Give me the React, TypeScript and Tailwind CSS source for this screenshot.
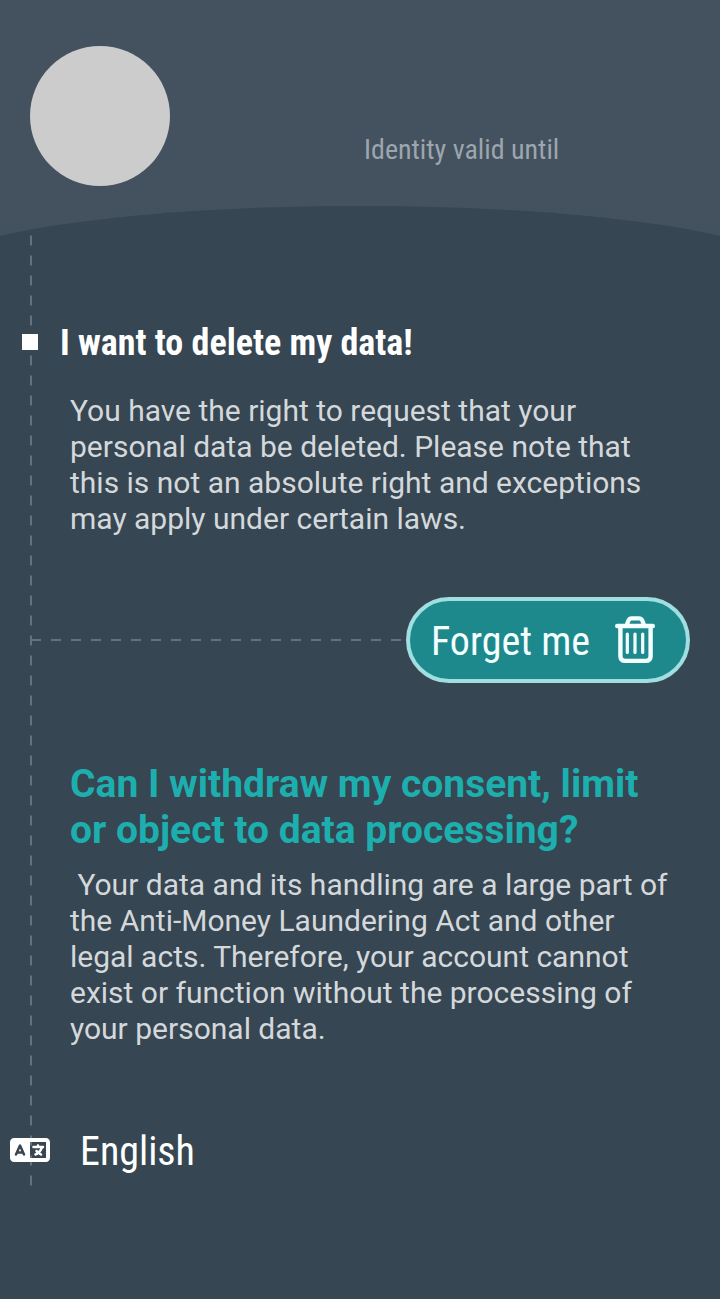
import { FaLanguage } from "react-icons/fa6";

const cond = "font-['Roboto_Condensed','Roboto',sans-serif] [font-stretch:75%] whitespace-nowrap";

function TrashIcon() {
  return (
    <svg className="h-[48px] w-[42px]" viewBox="0 0 42 48" fill="none" stroke="#f4ffff" strokeLinecap="round" strokeLinejoin="round">
      <path d="M3.200 10H38.800" strokeWidth="4.400" />
      <path d="M12.800 9L14.300 4.800Q15.200 2.400 17.600 2.400H25Q27.400 2.400 28.400 4.800L30 9" strokeWidth="4.200" />
      <path d="M6.400 11V40Q6.400 44.900 11.300 44.900H31.700Q36.600 44.900 36.600 40V11" strokeWidth="4.400" />
      <path d="M13.300 18V36.400M21 18V36.400M28.700 18V36.400" strokeWidth="3.200" />
    </svg>
  );
}

export default function App() {
  return (
    <div className="relative h-[1299px] w-[720px] overflow-hidden bg-[#364652] font-['Roboto',sans-serif]">
      <header className="relative h-[236px] bg-[#44515e] px-[30px] pt-[46px]">
        <svg className="absolute left-0 top-[206px] h-[30px] w-[720px]" viewBox="0 0 720 30">
          <ellipse cx="360" cy="67" rx="432" ry="67" fill="#364652" />
        </svg>
        <div className="flex">
          <div className="size-[140px] rounded-full bg-[#cccccc]" />
          <p className={`${cond} ml-[194px] mt-[84px] text-[28px] leading-[40px] text-[#9ca6af]`}>Identity valid until</p>
        </div>
      </header>
      <svg className="absolute left-[30px] top-[235px] h-[951px] w-[2px]" viewBox="0 0 2 951">
        <path d="M1 0.500V951" stroke="#65727d" strokeWidth="2" strokeDasharray="10 10" />
      </svg>
      <main>
        <div className="relative mt-[82px] flex h-12 items-center pl-[22px]">
          <div className="size-4 bg-white" />
          <h1 className={`${cond} ml-[22px] pt-[2px] text-[36px] font-bold leading-[48px] text-white`}>I want to delete my data!</h1>
        </div>
        <p className="ml-[70px] mt-[27px] whitespace-nowrap text-[30px] leading-[36px] text-[#d4d8db]">
          You have the right to request that your<br />personal data be deleted. Please note that<br />this is not an absolute right and exceptions<br />may apply under certain laws.
        </p>
        <div className="mt-[60px] flex items-center pl-[31px]">
          <svg className="h-[2px] w-[375px]" viewBox="0 0 375 2">
            <path d="M0 1H371" stroke="#65727d" strokeWidth="2" strokeDasharray="10 10" />
          </svg>
          <button className="flex h-[86px] w-[284px] items-center justify-between rounded-full border-4 border-[#a0dfe0] bg-[#1e898d] pl-[21px] pr-[30px]">
            <span className={`${cond} pt-1 text-[40px] text-[#f4ffff]`}>Forget me</span>
            <TrashIcon />
          </button>
        </div>
        <h2 className="ml-[70px] mt-[78px] whitespace-nowrap text-[39px] font-bold leading-[46px] text-[#1cafae]">
          Can I withdraw my consent, limit<br />or object to data processing?
        </h2>
        <p className="ml-[70px] mt-[14px] whitespace-nowrap text-[30px] leading-[36px] text-[#d4d8db]">
          &nbsp;Your data and its handling are a large part of<br />the Anti-Money Laundering Act and other<br />legal acts. Therefore, your account cannot<br />exist or function without the processing of<br />your personal data.
        </p>
        <div className="mt-[79px] flex h-12 items-center pl-[10px]">
          <FaLanguage className="relative h-8 w-10 text-white" />
          <span className={`${cond} ml-[30px] pt-1 text-[40px] text-white`}>English</span>
        </div>
      </main>
    </div>
  );
}
